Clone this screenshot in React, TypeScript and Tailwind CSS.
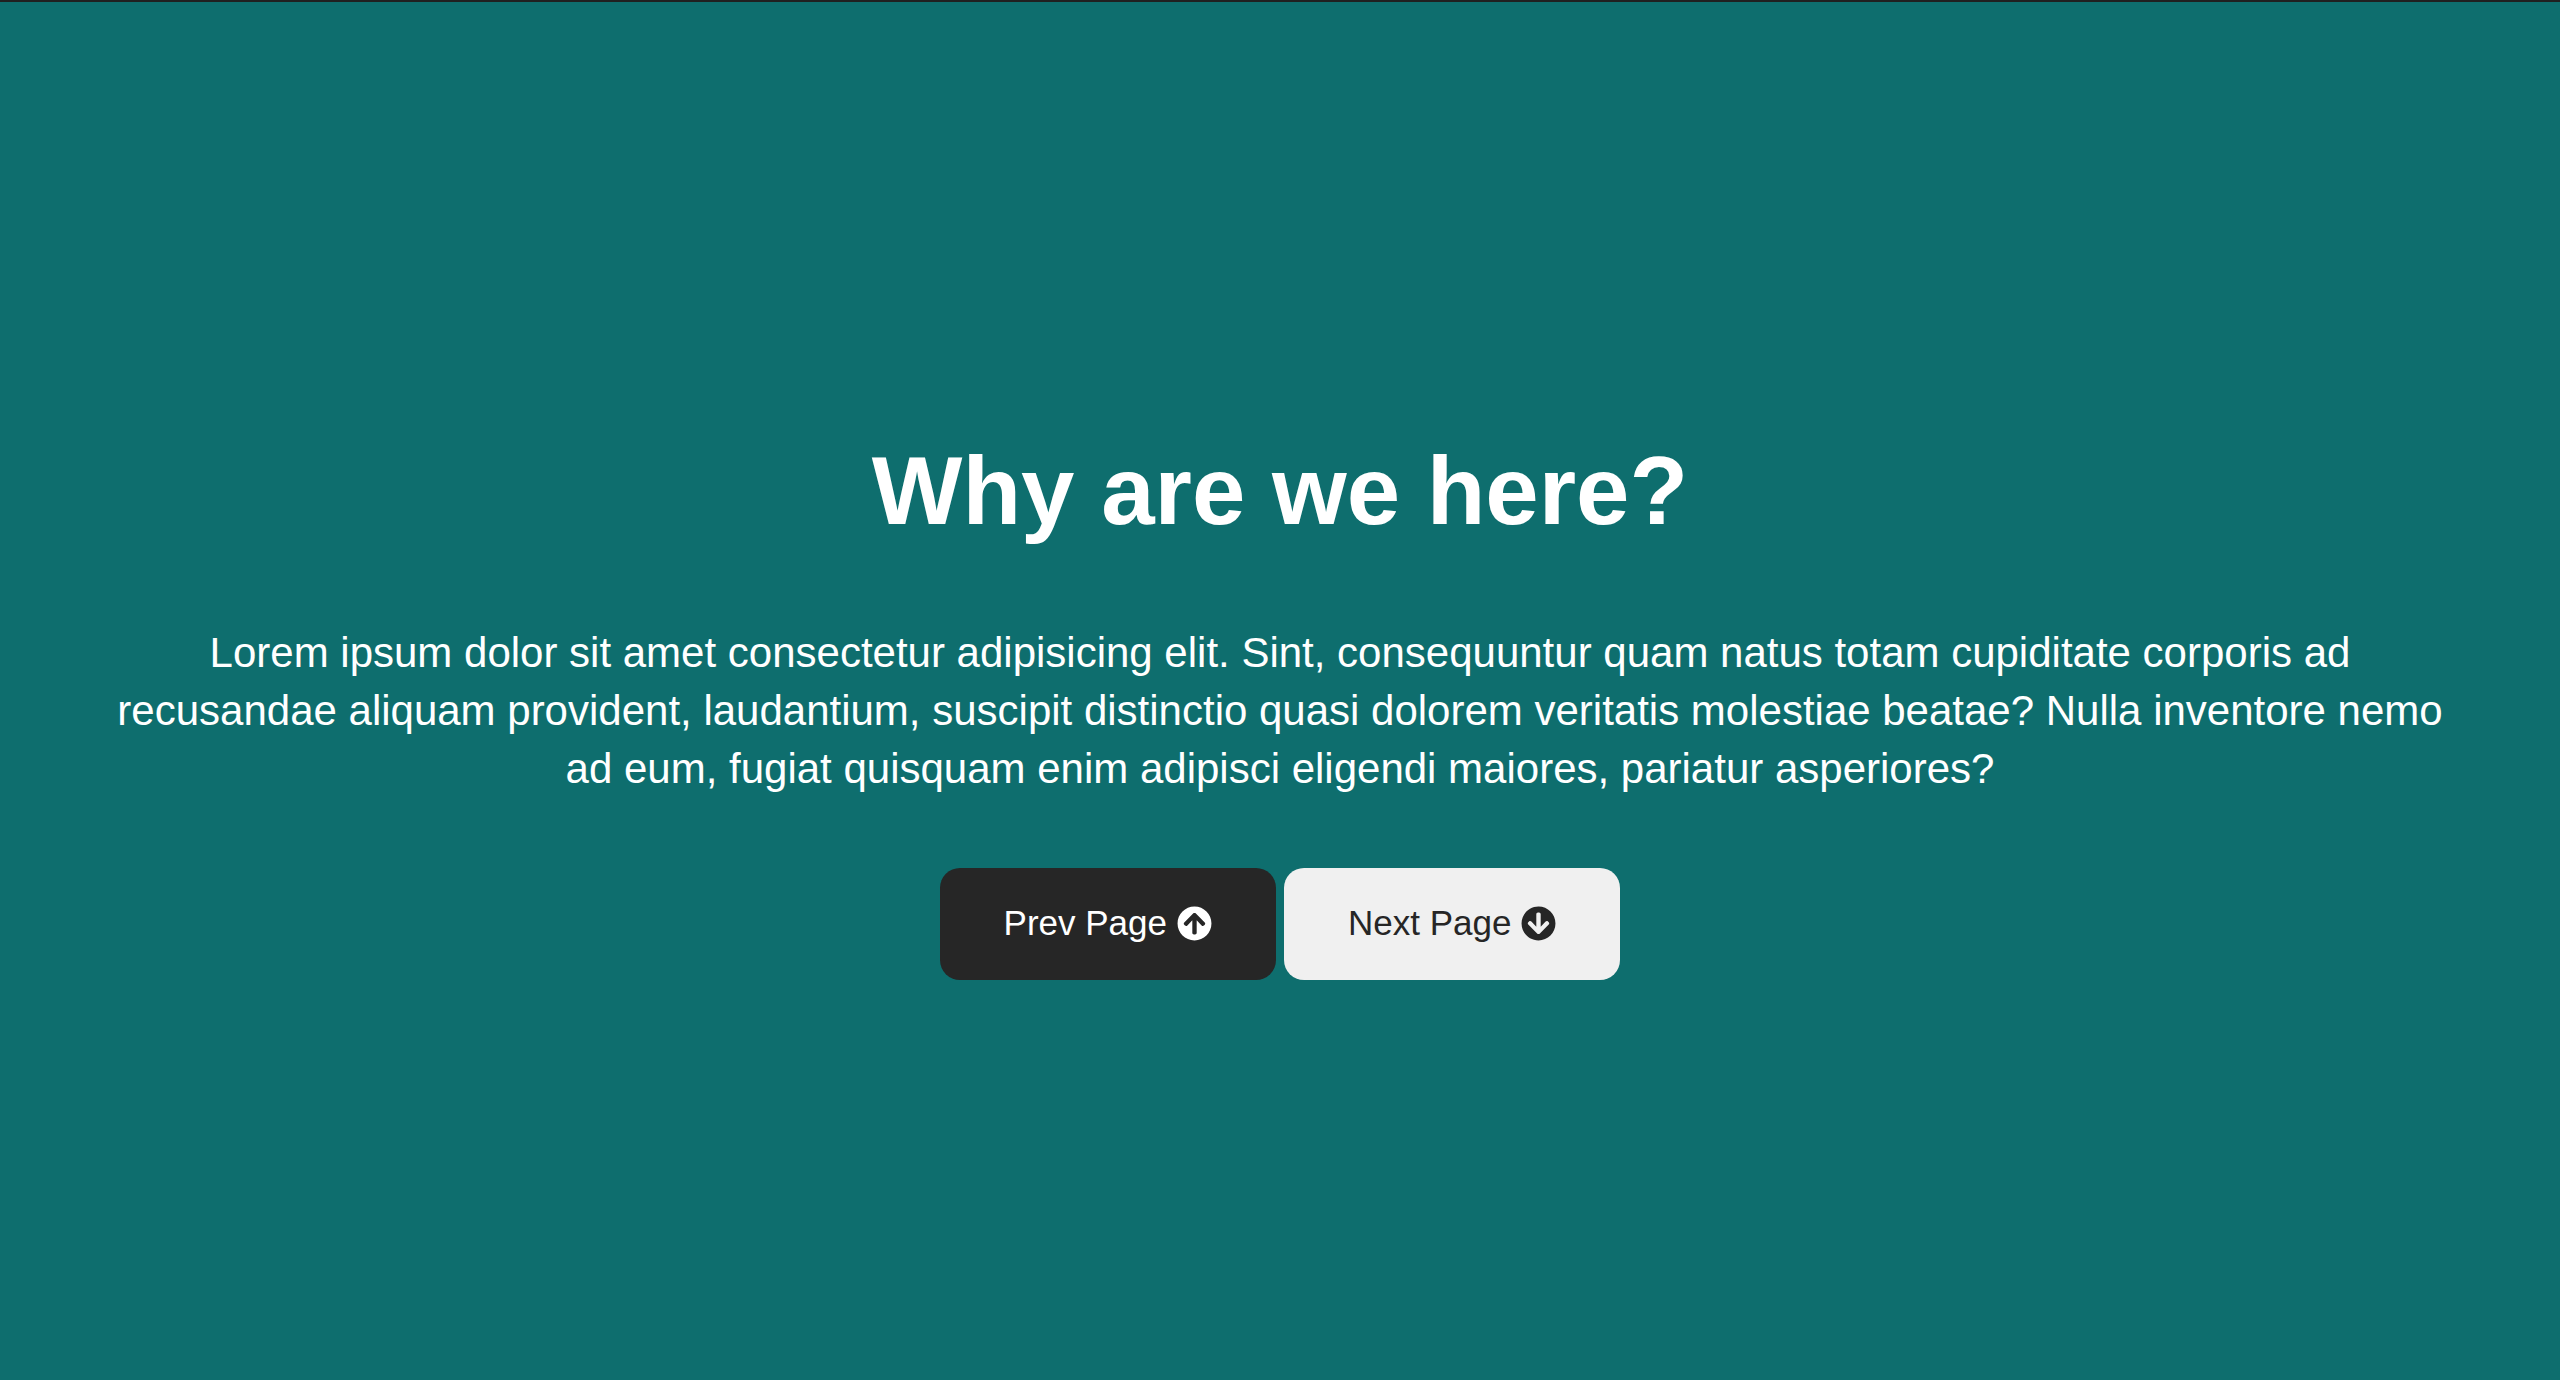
import { FaArrowCircleDown, FaArrowCircleUp } from "react-icons/fa";

export default function App() {
  return (
    <main className="flex min-h-screen flex-col items-center justify-center border-t-2 border-[#202020] bg-[#0e6e6e] px-[100px] pt-10 text-center font-['Liberation_Sans',Arial,sans-serif] text-white">
      <h1 className="text-8xl font-bold">Why are we here?</h1>
      <p className="mt-[85px] text-[42px] leading-[58px]">
        Lorem ipsum dolor sit amet consectetur adipisicing elit. Sint, consequuntur quam natus totam
        cupiditate corporis ad recusandae aliquam provident, laudantium, suscipit distinctio quasi
        dolorem veritatis molestiae beatae? Nulla inventore nemo ad eum, fugiat quisquam enim
        adipisci eligendi maiores, pariatur asperiores?
      </p>
      <nav className="mt-[70px] flex gap-2 text-[35px]">
        <a href="#prev" className="flex h-28 items-center gap-2.5 rounded-[20px] bg-[#262626] px-16">
          Prev Page <FaArrowCircleUp aria-hidden="true" />
        </a>
        <a href="#next" className="flex h-28 items-center gap-2.5 rounded-[20px] bg-[#f0f0f0] px-16 text-[#262626]">
          Next Page <FaArrowCircleDown aria-hidden="true" />
        </a>
      </nav>
    </main>
  );
}
